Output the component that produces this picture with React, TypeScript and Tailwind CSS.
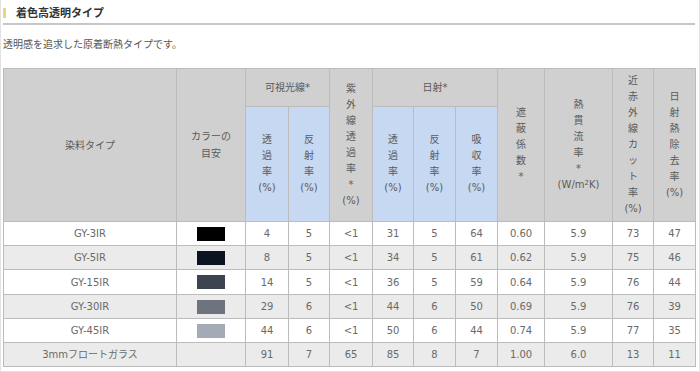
import React from 'react'

const FONT = { fontFamily: '"DejaVu Sans", "Noto Sans CJK JP", sans-serif' }

type Row = {
  name: string
  swatch: string | null
  values: string[]
}

const ROWS: Row[] = [
  { name: 'GY-3IR',  swatch: '#000000', values: ['4',  '5', '<1', '31', '5', '64', '0.60', '5.9', '73', '47'] },
  { name: 'GY-5IR',  swatch: '#0c1320', values: ['8',  '5', '<1', '34', '5', '61', '0.62', '5.9', '75', '46'] },
  { name: 'GY-15IR', swatch: '#3d444f', values: ['14', '5', '<1', '36', '5', '59', '0.64', '5.9', '76', '44'] },
  { name: 'GY-30IR', swatch: '#6d747f', values: ['29', '6', '<1', '44', '6', '50', '0.69', '5.9', '76', '39'] },
  { name: 'GY-45IR', swatch: '#a4abb4', values: ['44', '6', '<1', '50', '6', '44', '0.74', '5.9', '77', '35'] },
  { name: '3mmフロートガラス', swatch: null, values: ['91', '7', '65', '85', '8', '7', '1.00', '6.0', '13', '11'] },
]

const COLS = [173, 69, 43, 41, 43, 41, 42, 42, 47, 68, 41, 42]

// one character (or token) per line, like the narrow header cells
function Stack({ lines }: { lines: React.ReactNode[] }) {
  return (
    <div className="flex flex-col items-center leading-[16px]">
      {lines.map((l, i) => (
        <span key={i}>{l}</span>
      ))}
    </div>
  )
}

const th = 'border border-[#bcbcbc] bg-[#d0d0d0] font-normal text-[#5a5a5a] text-[10px] align-middle text-center p-0'
const thBlue = 'border border-[#bcbcbc] bg-[#c6d8f2] font-normal text-[#5a5a5a] text-[10px] align-middle text-center p-0'
const td = 'border border-[#bcbcbc] text-[#6a6a6a] text-[10px] text-center align-middle p-0'

export default function App() {
  return (
    <div className="w-[700px] h-[372px] overflow-hidden bg-white border-l border-r border-b border-[#e2e2e2]" style={FONT}>
      <div className="pl-[2px] pt-[7px]">
        {/* section title */}
        <div className="flex items-center h-[12px]">
          <div className="w-[3px] h-[10px] bg-[#e9d77c]" />
          <span className="ml-[10px] text-[11px] font-bold text-[#333] leading-none">着色高透明タイプ</span>
        </div>
        <div className="mt-[4px] h-[2px] w-[692px] bg-[#c6c6c6]" />
        <p className="mt-[13px] text-[10px] leading-[14px] text-[#555]">透明感を追求した原着断熱タイプです。</p>

        <table className="mt-[16px] w-[692px] table-fixed border-collapse">
          <colgroup>
            {COLS.map((w, i) => (
              <col key={i} style={{ width: w }} />
            ))}
          </colgroup>
          <thead>
            <tr className="h-[38px]">
              <th rowSpan={2} className={th}>染料タイプ</th>
              <th rowSpan={2} className={`${th} leading-[17px]`}>カラーの<br />目安</th>
              <th colSpan={2} className={th}>可視光線*</th>
              <th rowSpan={2} className={th}>
                <Stack lines={['紫', '外', '線', '透', '過', '率', '*', '(%)']} />
              </th>
              <th colSpan={3} className={th}>日射*</th>
              <th rowSpan={2} className={th}>
                <Stack lines={['遮', '蔽', '係', '数', '*']} />
              </th>
              <th rowSpan={2} className={th}>
                <Stack lines={['熱', '貫', '流', '率', '*', <>(W/m<sup className="text-[7px]">2</sup>K)</>]} />
              </th>
              <th rowSpan={2} className={th}>
                <Stack lines={['近', '赤', '外', '線', 'カ', 'ッ', 'ト', '率', '(%)']} />
              </th>
              <th rowSpan={2} className={th}>
                <Stack lines={['日', '射', '熱', '除', '去', '率', '(%)']} />
              </th>
            </tr>
            <tr className="h-[115px]">
              <th className={thBlue}><Stack lines={['透', '過', '率', '(%)']} /></th>
              <th className={thBlue}><Stack lines={['反', '射', '率', '(%)']} /></th>
              <th className={thBlue}><Stack lines={['透', '過', '率', '(%)']} /></th>
              <th className={thBlue}><Stack lines={['反', '射', '率', '(%)']} /></th>
              <th className={thBlue}><Stack lines={['吸', '収', '率', '(%)']} /></th>
            </tr>
          </thead>
          <tbody>
            {ROWS.map((r, i) => (
              <tr key={r.name} className={`${i === 2 ? 'h-[25px]' : 'h-[24px]'} ${i % 2 === 1 ? 'bg-[#ebebeb]' : 'bg-white'}`}>
                <td className={td}>{r.name}</td>
                <td className={td}>
                  {r.swatch && (
                    <div className="mx-auto w-[28px] h-[14px]" style={{ backgroundColor: r.swatch }} />
                  )}
                </td>
                {r.values.map((v, j) => (
                  <td key={j} className={td}>{v}</td>
                ))}
              </tr>
            ))}
          </tbody>
        </table>
      </div>
    </div>
  )
}
